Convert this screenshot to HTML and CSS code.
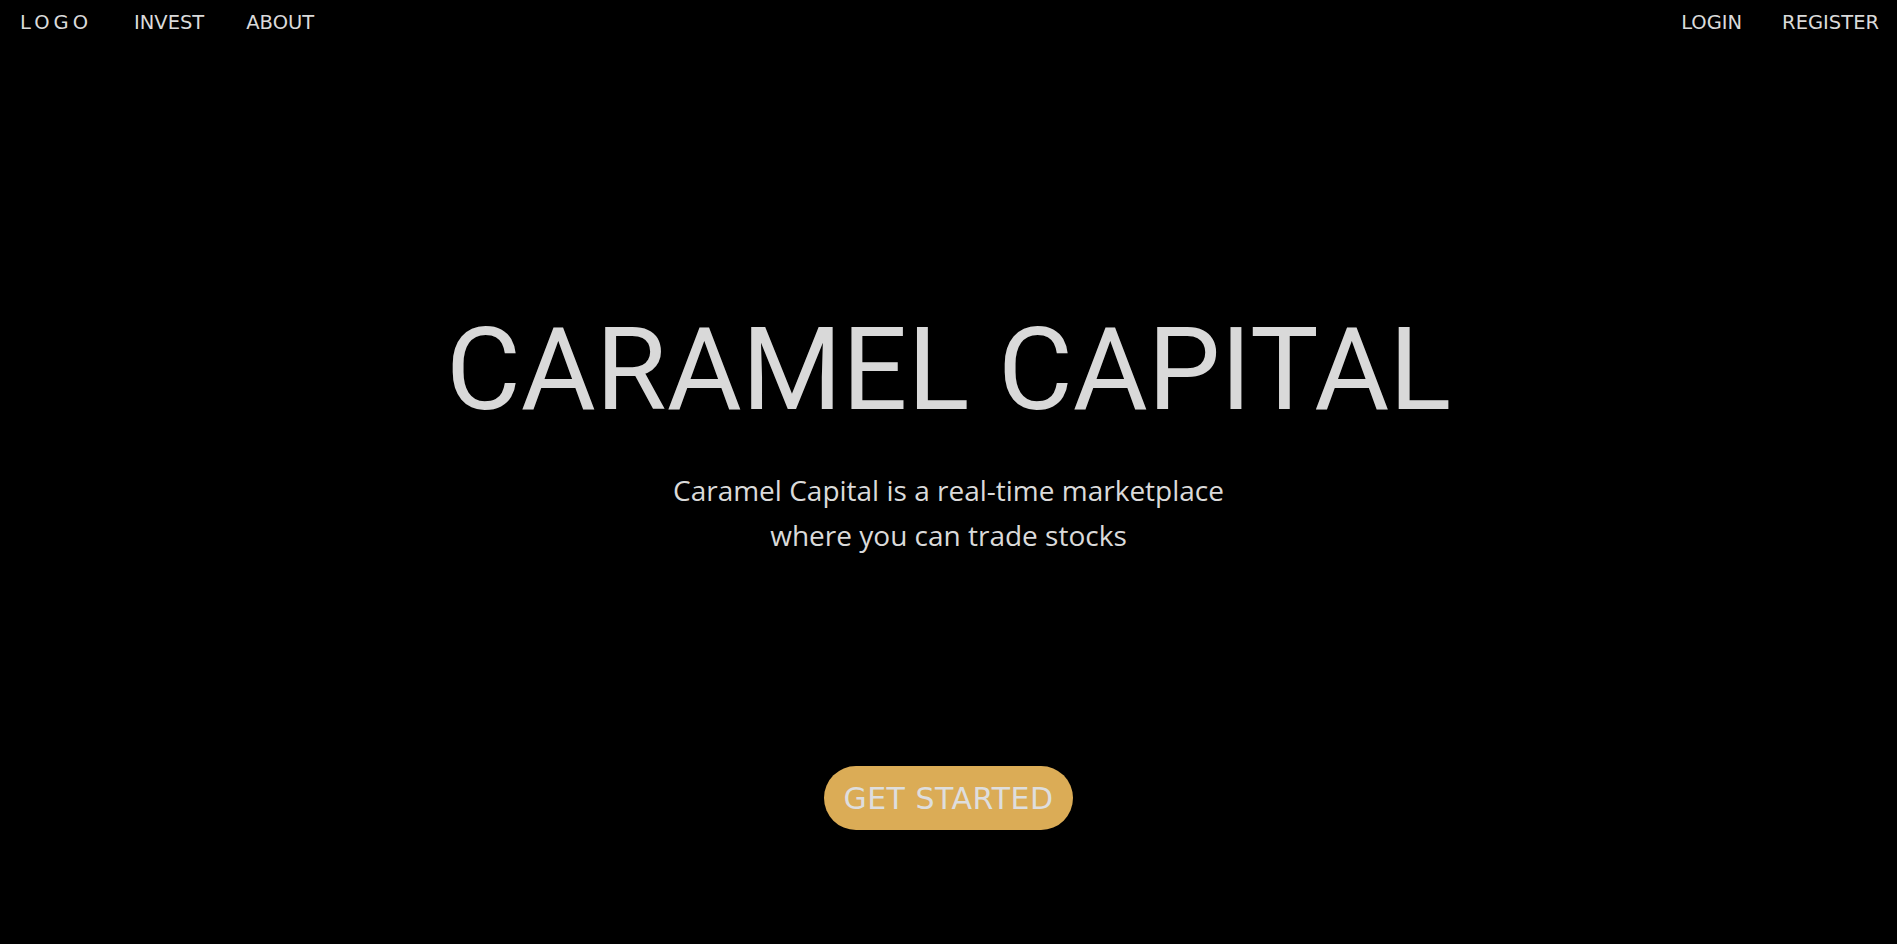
FILE: index.html
```html
<!DOCTYPE html>
<html>
<head>
<meta charset="utf-8">
<link rel="stylesheet" href="styles.css">
</head>
<body>
<nav class="nav">
  <div class="nav-left">
    <a class="logo">LOGO</a>
    <a class="nav-link">INVEST</a>
    <a class="nav-link">ABOUT</a>
  </div>
  <div class="nav-right">
    <a class="nav-link">LOGIN</a>
    <a class="nav-link">REGISTER</a>
  </div>
</nav>
<main class="hero">
  <h1 class="title">CARAMEL CAPITAL</h1>
  <p class="subtitle">Caramel Capital is a real-time marketplace<br>where you can trade stocks</p>
  <a class="cta">GET STARTED</a>
</main>
</body>
</html>
```
FILE: styles.css
```css
html, body {
  margin: 0;
  padding: 0;
  background: #000;
  height: 100%;
}
body {
  color: #dadada;
  font-family: "Open Sans", sans-serif;
}
.nav {
  display: flex;
  justify-content: space-between;
  align-items: center;
  height: 44px;
  padding: 0 18px 0 20px;
}
.nav-left, .nav-right {
  display: flex;
  align-items: center;
  gap: 40px;
}
.nav-left {
  gap: 42px;
}
.nav a {
  font-family: "DejaVu Sans", sans-serif;
  font-size: 19.5px;
  color: #dadada;
}
.nav .logo {
  letter-spacing: 4px;
}
.hero {
  display: flex;
  flex-direction: column;
  align-items: center;
}
.title {
  margin: 256px 0 0;
  font-family: Roboto, sans-serif;
  font-weight: 400;
  font-size: 115px;
  line-height: 140px;
  color: #d9d9d9;
}
.subtitle {
  margin: 28px 0 0;
  font-size: 28px;
  line-height: 45px;
  text-align: center;
  color: #dadada;
}
.cta {
  margin-top: 208px;
  width: 249px;
  height: 64px;
  border-radius: 32px;
  background: #dbac56;
  display: flex;
  align-items: center;
  justify-content: center;
  font-family: "DejaVu Sans", sans-serif;
  font-size: 30px;
  letter-spacing: 0.5px;
  color: #dedede;
}
```
